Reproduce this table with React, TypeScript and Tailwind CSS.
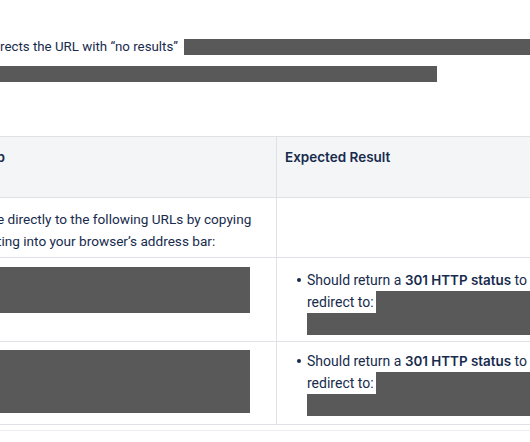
import React from 'react';

const Redact = ({ className = '' }: { className?: string }) => (
  <span className={`inline-block bg-[#595959] align-top ${className}`} />
);

function ResultCell({ tall }: { tall?: boolean }) {
  return (
    <ul className={`pl-[30px] ${tall ? 'pt-[8px]' : 'pt-[11px]'} leading-[22px]`}>
      <li className="relative whitespace-nowrap">
        <span className="absolute -left-[10px] top-[9px] h-[4px] w-[4px] rounded-full bg-[#172b4d]" />
        Should return a <b className="text-[13.4px] font-semibold [font-family:Inter,sans-serif]">301 HTTP status</b> to the new URL and
      </li>
      <li className="flex h-[22px] items-start whitespace-nowrap">
        <span>redirect to:</span>
        <Redact className="ml-[2px] h-[22px] w-[200px]" />
      </li>
      <li className="h-[22px]">
        <Redact className="h-[22px] w-[240px]" />
      </li>
    </ul>
  );
}

export default function App() {
  return (
    <div className="h-[442px] w-[530px] overflow-hidden bg-white text-[14px] text-[#172b4d] [font-family:Roboto,'Noto_Sans',sans-serif]">
      <div className="pt-[33px] text-[13.3px]">
        <div className="flex h-[27px] items-center whitespace-nowrap">
          <span className="mr-[6px]">rects the URL with “no results”</span>
          <Redact className="h-[16px] w-[360px] self-center" />
        </div>
        <div className="flex h-[27px] items-center">
          <Redact className="h-[16px] w-[437px]" />
        </div>
      </div>

      <div className="mt-[49px] -ml-[10px] w-[600px] border-t border-[#dfe1e6]">
        <div className="grid grid-cols-[287px_1fr] border-b border-[#dfe1e6] bg-[#f4f5f7] text-[13.5px] font-semibold [font-family:Inter,sans-serif]">
          <div className="h-[60px] overflow-hidden border-r border-[#dfe1e6] pl-[7px] pt-[8px] leading-[24px]">
            <span className="-ml-[22px]">Step</span>
          </div>
          <div className="h-[60px] pl-[8px] pt-[8px] leading-[24px]">Expected Result</div>
        </div>

        <div className="grid grid-cols-[287px_1fr] border-b border-[#dfe1e6]">
          <div className="h-[59px] border-r border-[#dfe1e6] pl-[7px] pt-[10px] text-[13.6px] leading-[22px] whitespace-nowrap">
            e directly to the following URLs by copying
            <br />
            ting into your browser’s address bar:
          </div>
          <div />
        </div>

        <div className="grid grid-cols-[287px_1fr] border-b border-[#dfe1e6]">
          <div className="h-[83px] border-r border-[#dfe1e6] pl-[7px] pt-[9px]">
            <Redact className="h-[46px] w-[253px]" />
          </div>
          <ResultCell />
        </div>

        <div className="grid grid-cols-[287px_1fr] border-b border-[#dfe1e6]">
          <div className="h-[82px] border-r border-[#dfe1e6] pl-[7px] pt-[8px]">
            <Redact className="h-[63px] w-[253px]" />
          </div>
          <ResultCell tall />
        </div>
        <div className="mt-[5px] border-t border-[#eceef2]" />
      </div>
    </div>
  );
}
